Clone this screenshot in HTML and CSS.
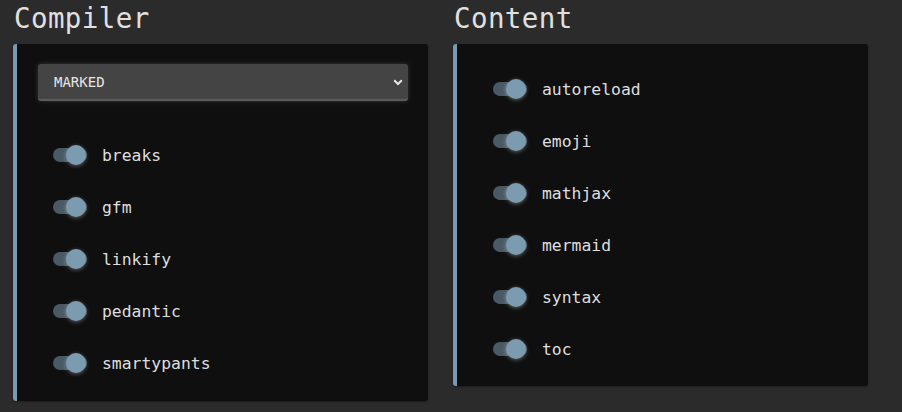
FILE: index.html
```html
<!DOCTYPE html>
<html>
<head>
<meta charset="utf-8">
<link rel="stylesheet" href="styles.css">
</head>
<body>
<div class="page">
  <section class="col">
    <h2 class="title">Compiler</h2>
    <div class="card card-compiler">
      <div class="select">
        <span class="select-text">MARKED</span>
        <svg class="chev" width="10" height="7" viewBox="0 0 10 7"><path d="M1.2 1.2 L5 5 L8.8 1.2" fill="none" stroke="#e6e6e6" stroke-width="2"/></svg>
      </div>
      <ul class="list list-compiler">
        <li class="row"><span class="toggle"><span class="knob"></span></span><span class="label">breaks</span></li>
        <li class="row"><span class="toggle"><span class="knob"></span></span><span class="label">gfm</span></li>
        <li class="row"><span class="toggle"><span class="knob"></span></span><span class="label">linkify</span></li>
        <li class="row"><span class="toggle"><span class="knob"></span></span><span class="label">pedantic</span></li>
        <li class="row"><span class="toggle"><span class="knob"></span></span><span class="label">smartypants</span></li>
      </ul>
    </div>
  </section>
  <section class="col">
    <h2 class="title">Content</h2>
    <div class="card card-content">
      <ul class="list list-content">
        <li class="row"><span class="toggle"><span class="knob"></span></span><span class="label">autoreload</span></li>
        <li class="row"><span class="toggle"><span class="knob"></span></span><span class="label">emoji</span></li>
        <li class="row"><span class="toggle"><span class="knob"></span></span><span class="label">mathjax</span></li>
        <li class="row"><span class="toggle"><span class="knob"></span></span><span class="label">mermaid</span></li>
        <li class="row"><span class="toggle"><span class="knob"></span></span><span class="label">syntax</span></li>
        <li class="row"><span class="toggle"><span class="knob"></span></span><span class="label">toc</span></li>
      </ul>
    </div>
  </section>
</div>
</body>
</html>
```

FILE: styles.css
```css
html, body {
  margin: 0;
  padding: 0;
  background: #2b2b2b;
  width: 902px;
  height: 412px;
  overflow: hidden;
}
body {
  font-family: "DejaVu Sans Mono", "Liberation Mono", monospace;
  color: #dcdcdc;
}
.page {
  display: flex;
  gap: 25px;
  padding: 0 0 0 13px;
  align-items: flex-start;
}
.col {
  width: 415px;
  display: flex;
  flex-direction: column;
}
.title {
  margin: 0;
  height: 44px;
  padding-left: 1px;
  font-weight: normal;
  font-size: 27.5px;
  line-height: 36px;
  color: #e0e0e0;
  letter-spacing: 0.4px;
}
.card {
  background: #0f0f0f;
  border-left: 4px solid #7a9bb0;
  border-radius: 3px;
  box-shadow: 0 1px 2px rgba(0,0,0,0.35);
}
.card-compiler {
  height: 357px;
  padding: 20px 20px 0 21px;
  box-sizing: border-box;
}
.card-content {
  height: 342px;
  padding: 19px 20px 0 21px;
  box-sizing: border-box;
}
.select {
  height: 37px;
  box-sizing: border-box;
  background: #444444;
  border-radius: 3px;
  border-bottom: 2px solid #5c5c5c;
  box-shadow: 0 0 5px rgba(255,255,255,0.16);
  display: flex;
  align-items: center;
  justify-content: space-between;
  padding: 0 5px 0 16px;
}
.select-text {
  font-size: 14px;
  color: #e6e6e6;
  padding-top: 1px;
}
.chev {
  display: block;
  margin-top: 1px;
}
.list {
  list-style: none;
  margin: 0;
  padding: 0 0 0 15px;
}
.list-compiler {
  padding-top: 28px;
}
.list-content {
  padding-top: 0;
}
.row {
  height: 52px;
  display: flex;
  align-items: center;
}
.toggle {
  position: relative;
  width: 34px;
  height: 14px;
  border-radius: 7px;
  background: #4a5a64;
  margin-right: 15px;
  flex: none;
}
.knob {
  position: absolute;
  left: 13px;
  top: -3px;
  width: 20px;
  height: 20px;
  border-radius: 50%;
  background: #7b9cb0;
  box-shadow: 0 1px 4px rgba(255,255,255,0.35);
}
.label {
  font-size: 16.4px;
  color: #dedede;
}
```
